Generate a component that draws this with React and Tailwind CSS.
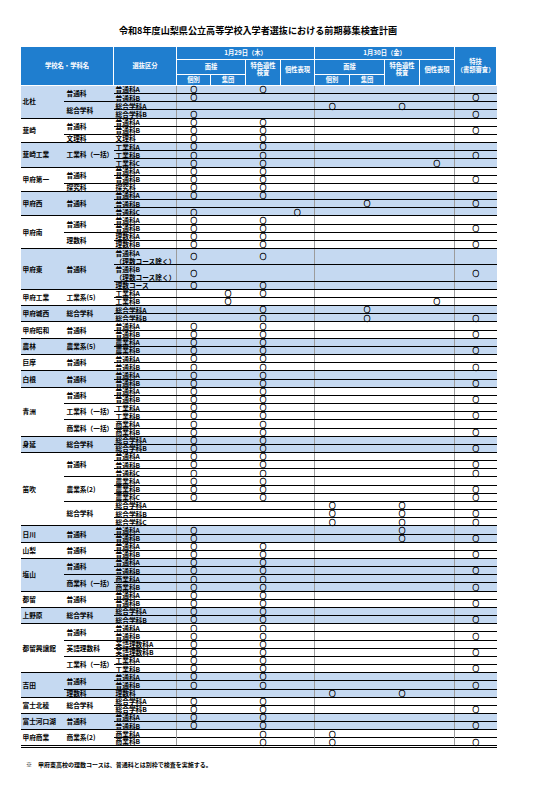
import React from 'react';

const AB = (p) => [[p + 'A', [0, 2]], [p + 'B', [0, 2, 8]]];
const ABC = (p) => [[p + 'A', [0, 2]], [p + 'B', [0, 2, 8]], [p + 'C', [0, 2, 8]]];

// [学校名, [[学科名, [[選抜区分, ○の列]]]]]
const schools = [
  ['北杜', [
    ['普通科', [['普通科A', [0, 2]], ['普通科B', [0, 8]]]],
    ['総合学科', [['総合学科A', [4, 6]], ['総合学科B', [0, 8]]]],
  ]],
  ['韮崎', [['普通科', AB('普通科')], ['文理科', [['文理科', [0, 2]]]]]],
  ['韮崎工業', [['工業科（一括）', [['工業科A', [0, 2]], ['工業科B', [0, 2, 8]], ['工業科C', [0, 2, 7]]]]]],
  ['甲府第一', [['普通科', AB('普通科')], ['探究科', [['探究科', [0, 2]]]]]],
  ['甲府西', [['普通科', [['普通科A', [0, 2]], ['普通科B', [5, 8]], ['普通科C', [0, 3]]]]]],
  ['甲府南', [['普通科', AB('普通科')], ['理数科', AB('理数科')]]],
  ['甲府東', [['普通科', [
    ['普通科A|（理数コース除く）', [0, 2]],
    ['普通科B|（理数コース除く）', [0, 8]],
    ['理数コース', [0, 2]],
  ]]]],
  ['甲府工業', [['工業系(5)', [['工業科A', [1, 2]], ['工業科B', [1, 7]]]]]],
  ['甲府城西', [['総合学科', [['総合学科A', [2, 5]], ['総合学科B', [2, 5, 8]]]]]],
  ['甲府昭和', [['普通科', AB('普通科')]]],
  ['農林', [['農業系(5)', AB('農業科')]]],
  ['巨摩', [['普通科', AB('普通科')]]],
  ['白根', [['普通科', AB('普通科')]]],
  ['青洲', [['普通科', AB('普通科')], ['工業科（一括）', AB('工業科')], ['商業科（一括）', AB('商業科')]]],
  ['身延', [['総合学科', AB('総合学科')]]],
  ['笛吹', [
    ['普通科', ABC('普通科')],
    ['農業系(2)', ABC('農業科')],
    ['総合学科', [['総合学科A', [4, 6]], ['総合学科B', [4, 6, 8]], ['総合学科C', [4, 6, 8]]]],
  ]],
  ['日川', [['普通科', [['普通科A', [0, 6]], ['普通科B', [0, 6, 8]]]]]],
  ['山梨', [['普通科', AB('普通科')]]],
  ['塩山', [['普通科', AB('普通科')], ['商業科（一括）', AB('商業科')]]],
  ['都留', [['普通科', AB('普通科')]]],
  ['上野原', [['総合学科', AB('総合学科')]]],
  ['都留興譲館', [['普通科', AB('普通科')], ['英語理数科', AB('英語理数科')], ['工業科（一括）', AB('工業科')]]],
  ['吉田', [['普通科', AB('普通科')], ['理数科', [['理数科', [4, 6]]]]]],
  ['富士北稜', [['総合学科', AB('総合学科')]]],
  ['富士河口湖', [['普通科', AB('普通科')]]],
  ['甲府商業', [['商業系(2)', [['商業科A', [2, 4]], ['商業科B', [2, 4, 8]]]]]],
];

const cols = [0, 1, 2, 3, 4, 5, 6, 7, 8];

function Body() {
  const out = [];
  schools.forEach(([sname, depts], si) => {
    const blue = si % 2 === 0;
    const lastSchool = si === schools.length - 1;
    const total = depts.reduce((n, d) => n + d[1].length, 0);
    depts.forEach(([dname, rows], di) => {
      const lastDept = lastSchool && di === depts.length - 1;
      rows.forEach(([label, marks], ri) => {
        const lastRow = lastDept && ri === rows.length - 1;
        const bb = lastRow ? 'border-b-[3px] border-double border-black' : 'border-b border-black';
        const [l1, l2] = label.split('|');
        out.push(
          <tr key={sname + label} className={`${l2 ? 'h-[16.3px]' : 'h-[8.16px]'} ${blue ? 'bg-[#c5d9f1]' : 'bg-white'}`}>
            {di === 0 && ri === 0 && (
              <td rowSpan={total} className={`p-0 pl-[2px] align-middle ${lastSchool ? 'border-b-[3px] border-double border-black' : 'border-b border-black'}`}>
                {sname}
              </td>
            )}
            {ri === 0 && (
              <td rowSpan={rows.length} className={`p-0 pl-[3px] align-middle ${lastDept ? 'border-b-[3px] border-double border-black' : 'border-b border-black'}`}>
                {dname}
              </td>
            )}
            <td className={`p-0 pl-[2px] align-bottom leading-none ${bb}`}>
              {l1}
              {l2 && <div className="leading-none mt-[1px]">{l2}</div>}
            </td>
            {cols.map((i) => (
              <td
                key={i}
                className={`p-0 text-center align-middle text-[6.6px] text-black [-webkit-text-stroke:0.35px_#000] ${bb} ${i === 0 || i === 4 || i === 8 ? 'border-l border-l-[#9c9c9c]' : ''}`}
              >
                {marks.includes(i) ? '○' : ''}
              </td>
            ))}
          </tr>
        );
      });
    });
  });
  return <tbody className="text-[6.7px] leading-none font-bold text-black">{out}</tbody>;
}

export default function App() {
  return (
    <div className="w-[543px] min-h-[792px] bg-white pt-[25px] pl-[20px] font-['Noto_Sans_CJK_JP',sans-serif] text-black">
      <h1 className="w-[476px] text-center text-[9.1px] leading-[10px] font-bold">
        令和8年度山梨県公立高等学校入学者選抜における前期募集検査計画
      </h1>
      <table className="mt-[11px] w-[476px] table-fixed border-collapse">
        <colgroup>
          <col className="w-[43px]" />
          <col className="w-[50px]" />
          <col className="w-[63px]" />
          <col className="w-[34px]" />
          <col className="w-[35px]" />
          <col className="w-[35px]" />
          <col className="w-[34px]" />
          <col className="w-[35px]" />
          <col className="w-[35px]" />
          <col className="w-[35px]" />
          <col className="w-[35px]" />
          <col className="w-[42px]" />
        </colgroup>
        <thead className="bg-[#1f7ecf] text-white text-[6.3px] leading-[1.2] font-bold">
          <tr className="h-[12.7px]">
            <th colSpan={2} rowSpan={3} className="p-0 border border-white">学校名・学科名</th>
            <th rowSpan={3} className="p-0 border border-white">選抜区分</th>
            <th colSpan={4} className="p-0 border border-white">1月29日（木）</th>
            <th colSpan={4} className="p-0 border border-white">1月30日（金）</th>
            <th rowSpan={3} className="p-0 border border-white">特技<br />（書類審査）</th>
          </tr>
          <tr className="h-[15.3px]">
            <th colSpan={2} className="p-0 border border-white">面接</th>
            <th rowSpan={2} className="p-0 pb-[6px] border border-white">特色適性<br />検査</th>
            <th rowSpan={2} className="p-0 pb-[6px] border border-white">個性表現</th>
            <th colSpan={2} className="p-0 border border-white">面接</th>
            <th rowSpan={2} className="p-0 pb-[6px] border border-white">特色適性<br />検査</th>
            <th rowSpan={2} className="p-0 pb-[6px] border border-white">個性表現</th>
          </tr>
          <tr className="h-[11px]">
            <th className="p-0 border border-white">個別</th>
            <th className="p-0 border border-white">集団</th>
            <th className="p-0 border border-white">個別</th>
            <th className="p-0 border border-white">集団</th>
          </tr>
        </thead>
        <Body />
      </table>
      <p className="mt-[14px] pl-[6px] text-[6px] leading-none font-bold">
        ※　甲府東高校の理数コースは、普通科とは別枠で検査を実施する。
      </p>
    </div>
  );
}
